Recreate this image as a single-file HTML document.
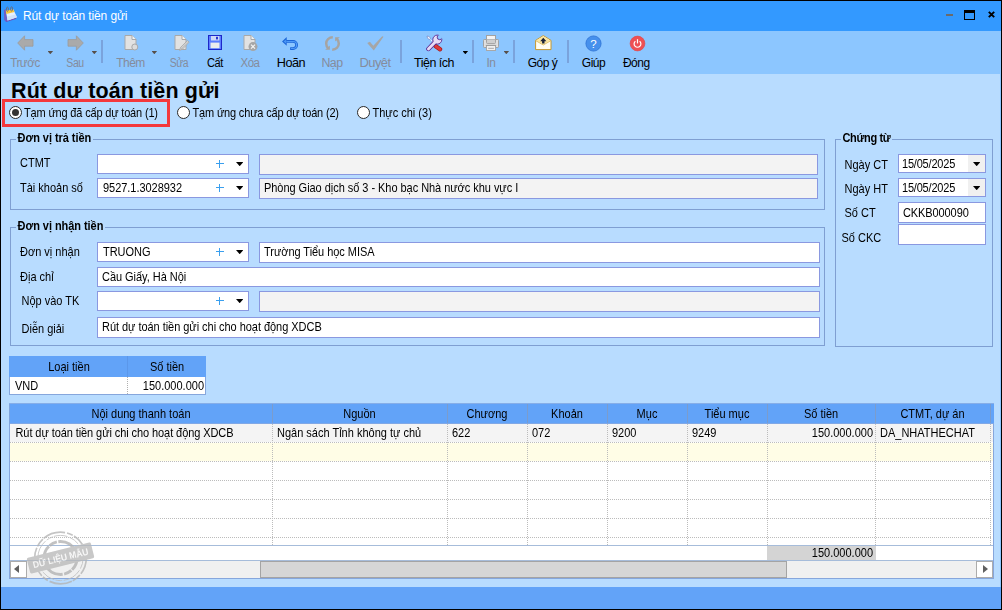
<!DOCTYPE html>
<html lang="vi">
<head>
<meta charset="utf-8">
<title>Rút dự toán tiền gửi</title>
<style>
*{box-sizing:border-box;margin:0;padding:0}
html,body{width:1002px;height:610px;overflow:hidden;background:#000}
body{font-family:"Liberation Sans",sans-serif;font-size:11px;color:#000;position:relative}
.abs{position:absolute}
#win{position:absolute;left:1px;top:1px;width:1000px;height:608px;background:#b8dcff;overflow:hidden}
#title{position:absolute;left:0;top:0;width:1000px;height:30px;background:#3399ff}
#title .txt{position:absolute;left:22px;top:8px;font-size:12px;line-height:14px;color:#fff;white-space:nowrap;letter-spacing:-.12px}
#tb{position:absolute;left:0;top:30px;width:1000px;height:43px;background:#8cc6ff}
.tbl{position:absolute;top:25px;font-size:12px;line-height:14px;white-space:nowrap;letter-spacing:-.5px;transform:translateX(-50%);color:#000}
.tbl.dis{color:#858c9c}
.sep{position:absolute;top:9px;width:2px;height:23px;background:#7aa3dc}
.dd{position:absolute;top:20px;margin-left:-.5px;width:5.600px;height:3.200px;background:#574f4a;clip-path:polygon(0 0,100% 0,50% 100%)}
.dd.blk{background:#000}
.ico{position:absolute}
h1{position:absolute;left:10px;top:78px;font-size:21.5px;line-height:24px;font-weight:bold;white-space:nowrap;letter-spacing:.1px}
.lbl{position:absolute;font-size:11px;line-height:13px;white-space:nowrap}
.grp{position:absolute;border:1px solid #7f9fd2}
.leg{position:absolute;font-weight:bold;font-size:11px;line-height:13px;background:#b8dcff;white-space:nowrap;padding:0 2px;letter-spacing:-0.05px}
.inp{letter-spacing:-.04px;position:absolute;border:1px solid #8a98e0;background:#fff;font-size:11px;line-height:13px;white-space:nowrap;overflow:hidden;padding:3px 0 0 5px}
.inp.ro{background:#f3f3f3}
.plus{position:absolute;width:8px;height:8px;margin:.6px 0 0 -.5px}
.plus:before{content:"";position:absolute;left:0;top:3.3px;width:8px;height:1.4px;background:#3a9fee}
.plus:after{content:"";position:absolute;left:3.3px;top:0;width:1.4px;height:8px;background:#3a9fee}
.arr{position:absolute;width:7.400px;height:4.200px;background:#000;clip-path:polygon(0 0,100% 0,50% 100%)}
.radio{position:absolute;width:13px;height:13px;border-radius:50%;border:1.3px solid #2a2a2a;background:#fff}
.radio.on:after{content:"";position:absolute;left:1.7px;top:1.7px;width:7px;height:7px;border-radius:50%;background:#333}
.gh{position:absolute;background:#62a3f8;font-size:11px;line-height:13px;text-align:center;white-space:nowrap;padding-top:3px}
.t{display:inline-block;transform:scaleY(1.1);transform-origin:0 10.3px}
.cell{position:absolute;font-size:11px;line-height:13px;white-space:nowrap}
</style>
</head>
<body>
<div id="win">
  <div id="title">
    <svg class="abs" style="left:2px;top:5px" width="16" height="18" viewBox="0 0 16 18">
      <path d="M0.9 3.9 L2.9 3.3 L4.3 15 L3.1 16 L1.2 14 Z" fill="#6f5cc4"/>
      <path d="M3.1 16 L3.3 14.4 L13.2 11.6 L13 13 Z" fill="#6a52b8"/>
      <path d="M2.8 4.5 L10.4 3.4 L13.9 11.2 L4.6 14.4 Z" fill="#e6f0fd"/>
      <path d="M4.2 10.500 L12.700 8.500 L13.900 11.200 L4.600 14.400 Z" fill="#cfe2fa"/>
      <path d="M2.8 4.5 L10.4 3.4 L11.5 5.9 L3.3 7.9 Z" fill="#f6c73c"/>
      <ellipse cx="4.4" cy="3.2" rx="1" ry="2.1" fill="none" stroke="#6c6c74" stroke-width=".9"/>
      <ellipse cx="8.6" cy="2.9" rx="1" ry="2.1" fill="none" stroke="#6c6c74" stroke-width=".9"/>
    </svg>
    <div class="txt">Rút dự toán tiền gửi</div>
    <div class="abs" style="left:945px;top:13px;width:7px;height:2px;background:#6b6b6b"></div>
    <div class="abs" style="left:963px;top:9px;width:11px;height:10px;border:1px solid #000;border-top:3px solid #000"></div>
    <svg class="abs" style="left:987px;top:10px" width="8" height="8" viewBox="0 0 8 8"><path d="M0.800 0.800 L6.200 6.200 M6.200 0.800 L0.800 6.200" stroke="#000" stroke-width="1.900"/></svg>
  </div>
  <div id="tb">
    <!-- Truoc -->
    <svg class="ico" style="left:16px;top:4px" width="17" height="16" viewBox="0 0 17 16"><path d="M0.7 8 L7.6 0.8 L7.6 4.6 L16 4.6 L16 11.200 L7.6 11.200 L7.6 15.200 Z" fill="#aaaaaa" stroke="#9a9a9a" stroke-width=".8"/></svg>
    <div class="tbl dis" style="left:24px;transform:translateX(-50%) scaleX(0.975)">Trước</div>
    <div class="dd" style="left:47px"></div>
    <!-- Sau -->
    <svg class="ico" style="left:65.500px;top:4px" width="17" height="16" viewBox="0 0 17 16"><path d="M16.300 8 L9.400 0.8 L9.400 4.6 L1 4.6 L1 11.200 L9.400 11.200 L9.400 15.200 Z" fill="#aaaaaa" stroke="#9a9a9a" stroke-width=".8"/></svg>
    <div class="tbl dis" style="left:74px;transform:translateX(-50%) scaleX(0.875)">Sau</div>
    <div class="dd" style="left:91px"></div>
    <div class="sep" style="left:100px"></div>
    <!-- Them -->
    <svg class="ico" style="left:122.5px;top:4px" width="15" height="16" viewBox="0 0 15 16"><path d="M1 .5 H8 L12 4.5 V14.5 H1 Z" fill="#e2e2e2" stroke="#a9a9a9"/><path d="M8 .5 V4.5 H12" fill="#f4f4f4" stroke="#a9a9a9"/><circle cx="10.8" cy="12" r="3" fill="#dcdcdc" stroke="#a9a9a9"/></svg>
    <div class="tbl dis" style="left:129.5px">Thêm</div>
    <div class="dd" style="left:151px"></div>
    <!-- Sua -->
    <svg class="ico" style="left:173px;top:4px" width="16" height="16" viewBox="0 0 16 16"><path d="M1 .5 H8 L12 4.5 V14.5 H1 Z" fill="#e2e2e2" stroke="#a9a9a9"/><path d="M8 .5 V4.5 H12" fill="#f4f4f4" stroke="#a9a9a9"/><path d="M5.6 15.4 L6.6 12.4 L13.4 5.600 L15 7.200 L8.400 14.200 Z" fill="#dcdcdc" stroke="#a4a4a4" stroke-width=".8"/><path d="M6.6 12.4 L8.4 14.2 M7.500 13.300 L14.200 6.400" stroke="#a4a4a4" stroke-width=".6" fill="none"/></svg>
    <div class="tbl dis" style="left:178px;transform:translateX(-50%) scaleX(0.87)">Sửa</div>
    <!-- Cat -->
    <svg class="ico" style="left:207px;top:4px" width="14" height="15" viewBox="0 0 14 15"><rect x=".5" y=".5" width="13" height="14" fill="#5b7cff" stroke="#1e28c8"/><rect x="3" y="1" width="8.4" height="4.5" fill="#cfd8f6"/><rect x="8" y="1.8" width="2" height="2.6" fill="#2a36d0"/><rect x="2.5" y="7.6" width="9" height="5.6" fill="#ececec"/></svg>
    <div class="tbl" style="left:214px;transform:translateX(-50%) scaleX(0.92)">Cất</div>
    <!-- Xoa -->
    <svg class="ico" style="left:241.5px;top:4px" width="16" height="17" viewBox="0 0 16 17"><path d="M1 .5 H8 L12 4.5 V14.5 H1 Z" fill="#e2e2e2" stroke="#a9a9a9"/><path d="M8 .5 V4.5 H12" fill="#f4f4f4" stroke="#a9a9a9"/><circle cx="10" cy="11.600" r="4.5" fill="#a6a6a6"/><path d="M8 9.600 L12 13.600 M12 9.600 L8 13.600" stroke="#f4f4f4" stroke-width="1.3"/></svg>
    <div class="tbl dis" style="left:248.5px;transform:translateX(-50%) scaleX(0.96)">Xóa</div>
    <!-- Hoan -->
    <svg class="ico" style="left:280px;top:6px" width="18" height="14" viewBox="0 0 18 14"><path d="M5.400 4.450 H12.100 A3.540 3.540 0 0 1 12.100 11.530 H9.140" fill="none" stroke="#1c66d8" stroke-width="2.750"/><path d="M1.070 4.450 L5.700 0.120 V8.780 Z" fill="#1c66d8"/><path d="M5.400 4.450 H12.100 A3.540 3.540 0 0 1 12.100 11.530 H10" fill="none" stroke="#4f9bf8" stroke-width="1.100"/><path d="M2.700 4.450 L4.900 2.400 V6.500 Z" fill="#4f9bf8"/></svg>
    <div class="tbl" style="left:289.5px;transform:translateX(-50%) scaleX(1.06)">Hoãn</div>
    <!-- Nap -->
    <svg class="ico" style="left:323px;top:4px" width="17" height="17" viewBox="0 0 17 17"><path d="M8.8 2.300 C5 2.300 2.200 5 2.200 8.500 C2.200 10.500 3 12.200 4.300 13.300" fill="none" stroke="#a6a4a2" stroke-width="2.500"/><path d="M1.200 14.700 H5.900 V10.400 Z" fill="#a6a4a2"/><path d="M8.200 14.700 C12 14.700 14.800 12 14.800 8.500 C14.800 6.500 14 4.800 12.700 3.700" fill="none" stroke="#a6a4a2" stroke-width="2.500"/><path d="M15.800 2.300 H11.100 V6.600 Z" fill="#a6a4a2"/></svg>
    <div class="tbl dis" style="left:331px;transform:translateX(-50%) scaleX(1.03)">Nạp</div>
    <!-- Duyet -->
    <svg class="ico" style="left:366px;top:5px" width="17" height="15" viewBox="0 0 17 15"><path d="M0.200 6.900 L2.900 5.800 L6.300 9.800 L15.200 0.200 L16.500 0.700 L6.800 14.500 Z" fill="#a6a6a6"/></svg>
    <div class="tbl dis" style="left:373.5px;transform:translateX(-50%) scaleX(1.08)">Duyệt</div>
    <div class="sep" style="left:399px"></div>
    <!-- Tien ich -->
    <svg class="ico" style="left:424px;top:3px" width="18" height="18" viewBox="0 0 18 18"><defs><mask id="wm"><rect width="18" height="18" fill="#fff"/><circle cx="14.700" cy="3.200" r="2.500" fill="#000"/></mask><clipPath id="wc"><circle cx="12.300" cy="5.600" r="4.400"/></clipPath></defs><path d="M2 2 L4.400 2.600 L5.800 5.200 L5.200 5.800 L2.600 4.400 Z" fill="#f4f8ff" stroke="#6a7ac0" stroke-width=".6"/><path d="M5.500 5.500 L9 9" stroke="#f0f4ff" stroke-width="1"/><path d="M10.800 12.200 L15 15.200" stroke="#a81818" stroke-width="4.400" stroke-linecap="round"/><path d="M10.800 12.200 L15 15.200" stroke="#de3a3a" stroke-width="3" stroke-linecap="round"/><path d="M3.400 15 L9.800 8.400" stroke="#5a2a92" stroke-width="4.400" stroke-linecap="round"/><g mask="url(#wm)"><circle cx="12.300" cy="5.600" r="4.500" fill="#e6dcf6" stroke="#5a2a92" stroke-width=".9"/></g><circle cx="14.700" cy="3.200" r="2.500" fill="none" stroke="#5a2a92" stroke-width=".9" clip-path="url(#wc)"/><path d="M3.400 15 L10.400 7.800" stroke="#e6dcf6" stroke-width="2.800" stroke-linecap="round"/></svg>
    <div class="tbl" style="left:433.3px;transform:translateX(-50%) scaleX(1.04)">Tiện ích</div>
    <div class="dd blk" style="left:462px"></div>
    <div class="sep" style="left:471px"></div>
    <!-- In -->
    <svg class="ico" style="left:482px;top:4px" width="16" height="16" viewBox="0 0 16 16"><rect x="3.5" y=".5" width="9" height="4.500" fill="#f4f4f4" stroke="#a2a2a2"/><rect x=".5" y="4.500" width="15" height="8" rx=".8" fill="#e0e0e0" stroke="#a2a2a2"/><path d="M3.500 4.500 V7.500 Q3.500 8.600 4.600 8.600 H11.400 Q12.500 8.600 12.500 7.500 V4.500" fill="#cfcfcf" stroke="#a2a2a2"/><rect x="3.500" y="10.500" width="9" height="5" fill="#f0f0f0" stroke="#a8a8a8"/><path d="M2.800 10.400 H13.200" stroke="#9c9c9c" stroke-width="1"/><path d="M5.200 13.300 H10.900" stroke="#a8a8a8" stroke-width="1"/></svg>
    <div class="tbl dis" style="left:490px">In</div>
    <div class="dd" style="left:503px"></div>
    <div class="sep" style="left:512px"></div>
    <!-- Gop y -->
    <svg class="ico" style="left:534px;top:4px" width="17" height="16" viewBox="0 0 17 16"><path d="M0.600 5.400 L8.300 0.600 L16 5.400 V14.600 H0.600 Z" fill="#fffdf2" stroke="#c8982a" stroke-width="1"/><path d="M1.100 5.400 L8.300 1.200 L15.500 5.400 L8.300 9.600 Z" fill="#fbe6a0"/><path d="M1 5.800 L8.300 10 L15.600 5.800" fill="none" stroke="#d8b24c" stroke-width=".8"/><path d="M8.300 2.800 L11.400 6.200 H9.500 V8.600 H7.100 V6.200 H5.200 Z" fill="#1a2238"/></svg>
    <div class="tbl" style="left:541.5px">Góp ý</div>
    <div class="sep" style="left:566px"></div>
    <!-- Giup -->
    <svg class="ico" style="left:583.600px;top:3.600px" width="17" height="17" viewBox="0 0 17 17"><circle cx="8.5" cy="8.5" r="7.600" fill="#4690ec" stroke="#2e72d4" stroke-width=".8"/><text x="8.5" y="12.600" text-anchor="middle" font-family="Liberation Sans,sans-serif" font-size="11.500" fill="#fff">?</text></svg>
    <div class="tbl" style="left:592.500px">Giúp</div>
    <!-- Dong -->
    <svg class="ico" style="left:628px;top:4px" width="17" height="17" viewBox="0 0 17 17"><circle cx="8.5" cy="8.5" r="7.400" fill="#ee5054" stroke="#e04448" stroke-width=".6"/><path d="M6.400 6.200 A3.400 3.400 0 1 0 10.600 6.200" fill="none" stroke="#fff" stroke-width="1.200"/><path d="M8.5 4.200 V8.400" stroke="#fff" stroke-width="1.200"/></svg>
    <div class="tbl" style="left:635.300px">Đóng</div>
  </div>
  <h1>Rút dự toán tiền gửi</h1>
  <!--FORM-->
  <div class="abs" style="left:1px;top:98px;width:168px;height:28px;border:3px solid #f4383c"></div>
  <div class="radio on" style="left:8px;top:105px"></div>
  <div class="lbl" style="left:23px;top:106px;letter-spacing:-.17px"><span class="t">Tạm ứng đã cấp dự toán (1)</span></div>
  <div class="radio" style="left:176px;top:105px"></div>
  <div class="lbl" style="left:191.5px;top:106px;letter-spacing:-.17px"><span class="t">Tạm ứng chưa cấp dự toán (2)</span></div>
  <div class="radio" style="left:356px;top:105px"></div>
  <div class="lbl" style="left:371.5px;top:106px"><span class="t">Thực chi (3)</span></div>
  <div class="grp" style="left:9px;top:138px;width:815px;height:71px"></div>
  <div class="leg" style="left:14.5px;top:131px"><span class="t">Đơn vị trả tiền</span></div>
  <div class="grp" style="left:9px;top:226px;width:815px;height:119px"></div>
  <div class="leg" style="left:14.5px;top:219px"><span class="t">Đơn vị nhận tiền</span></div>
  <div class="grp" style="left:834px;top:138px;width:158px;height:208px"></div>
  <div class="leg" style="left:839.5px;top:131px;letter-spacing:-.35px"><span class="t">Chứng từ</span></div>
  <div class="lbl" style="left:19px;top:156px"><span class="t">CTMT</span></div>
  <div class="inp" style="left:96px;top:153px;width:152px;height:20px"></div>
  <div class="plus" style="left:215px;top:158px"></div>
  <div class="arr" style="left:235px;top:161px"></div>
  <div class="inp ro" style="left:258px;top:153px;width:559px;height:21px;padding-left:4px"></div>
  <div class="lbl" style="left:19px;top:181px"><span class="t">Tài khoản số</span></div>
  <div class="inp" style="left:96px;top:177px;width:152px;height:20px"><span class="t">9527.1.3028932</span></div>
  <div class="plus" style="left:215px;top:182px"></div>
  <div class="arr" style="left:235px;top:185px"></div>
  <div class="inp ro" style="left:258px;top:177px;width:559px;height:21px;padding-left:4px"><span class="t">Phòng Giao dịch số 3 - Kho bạc Nhà nước khu vực I</span></div>
  <div class="lbl" style="left:19px;top:245px"><span class="t">Đơn vị nhận</span></div>
  <div class="inp" style="left:96px;top:241px;width:152px;height:20px"><span class="t">TRUONG</span></div>
  <div class="plus" style="left:215px;top:246px"></div>
  <div class="arr" style="left:235px;top:249px"></div>
  <div class="inp" style="left:258px;top:241px;width:561px;height:21px;padding-left:4px"><span class="t">Trường Tiểu học MISA</span></div>
  <div class="lbl" style="left:19px;top:270px"><span class="t">Địa chỉ</span></div>
  <div class="inp" style="left:96px;top:266px;width:723px;height:20px;padding-left:4px"><span class="t">Cầu Giấy, Hà Nội</span></div>
  <div class="lbl" style="left:20.5px;top:294px"><span class="t">Nộp vào TK</span></div>
  <div class="inp" style="left:96px;top:290px;width:152px;height:20px"></div>
  <div class="plus" style="left:215px;top:295px"></div>
  <div class="arr" style="left:235px;top:298px"></div>
  <div class="inp ro" style="left:258px;top:290px;width:561px;height:21px;padding-left:4px"></div>
  <div class="lbl" style="left:20.5px;top:321.5px"><span class="t">Diễn giải</span></div>
  <div class="inp" style="left:96px;top:316px;width:723px;height:21px;padding-left:4px"><span class="t">Rút dự toán tiền gửi chi cho hoạt động XDCB</span></div>
  <div class="lbl" style="left:843.5px;top:157.5px"><span class="t">Ngày CT</span></div>
  <div class="lbl" style="left:843.5px;top:181.5px"><span class="t">Ngày HT</span></div>
  <div class="lbl" style="left:843.5px;top:205.5px"><span class="t">Số CT</span></div>
  <div class="lbl" style="left:840.5px;top:230.5px"><span class="t">Số CKC</span></div>
  <div class="inp" style="left:897px;top:153px;width:88px;height:19px;padding-top:3px;padding-left:3px;letter-spacing:-.2px"><span class="t">15/05/2025</span></div>
  <div class="abs" style="left:967px;top:154px;width:17px;height:17px;background:#f0f0f0"></div>
  <div class="arr" style="left:972px;top:161px"></div>
  <div class="inp" style="left:897px;top:177px;width:88px;height:19px;padding-top:3px;padding-left:3px;letter-spacing:-.2px"><span class="t">15/05/2025</span></div>
  <div class="abs" style="left:967px;top:178px;width:17px;height:17px;background:#f0f0f0"></div>
  <div class="arr" style="left:972px;top:185px"></div>
  <div class="inp" style="left:897px;top:201px;width:88px;height:21px;padding-top:4px;padding-left:4px;letter-spacing:-.1px"><span class="t">CKKB000090</span></div>
  <div class="inp" style="left:897px;top:223px;width:88px;height:21px"></div>
  <!--/FORM-->
  <!--GRID-->
  <div class="abs" style="left:8px;top:355px;width:197px;height:39px;background:#fff;border:1px solid #86a6dc;border-top:none"></div>
  <div class="gh" style="left:8px;top:355px;width:118px;height:21px;padding-top:5px;padding-left:2px"><span class="t">Loại tiền</span></div>
  <div class="gh" style="left:127px;top:355px;width:78px;height:21px;padding-top:5px"><span class="t">Số tiền</span></div>
  <div class="abs" style="left:126px;top:355px;width:1px;height:21px;background:#5b97ea"></div>
  <div class="abs" style="left:126px;top:376px;width:0;height:17px;border-left:1px dotted #b0b0b0"></div>
  <div class="cell" style="left:14px;top:379px"><span class="t">VND</span></div>
  <div class="cell" style="left:127px;top:379px;width:76px;text-align:right"><span class="t">150.000.000</span></div>
  <div class="abs" style="left:8px;top:402px;width:985px;height:1px;background:#86aee8"></div>
  <div id="grid" class="abs" style="left:8px;top:403px;width:985px;height:175px;background:#fff;overflow:hidden">
  <div class="gh" style="left:0;top:0;width:985px;height:20px"></div>
  <div class="gh" style="left:1px;top:0;width:262px;height:20px;background:none;padding-top:4px"><span class="t">Nội dung thanh toán</span></div>
  <div class="gh" style="left:263px;top:0;width:175px;height:20px;background:none;padding-top:4px"><span class="t">Nguồn</span></div>
  <div class="gh" style="left:438px;top:0;width:80px;height:20px;background:none;padding-top:4px"><span class="t">Chương</span></div>
  <div class="gh" style="left:518px;top:0;width:80px;height:20px;background:none;padding-top:4px"><span class="t">Khoản</span></div>
  <div class="gh" style="left:598px;top:0;width:80px;height:20px;background:none;padding-top:4px"><span class="t">Mục</span></div>
  <div class="gh" style="left:678px;top:0;width:80px;height:20px;background:none;padding-top:4px"><span class="t">Tiểu mục</span></div>
  <div class="gh" style="left:758px;top:0;width:108px;height:20px;background:none;padding-top:4px"><span class="t">Số tiền</span></div>
  <div class="gh" style="left:866px;top:0;width:115px;height:20px;background:none;padding-top:4px"><span class="t">CTMT, dự án</span></div>
  <div class="abs" style="left:263px;top:1px;width:1px;height:20px;background:#7b9ccc;margin-top:-1px"></div>
  <div class="abs" style="left:438px;top:1px;width:1px;height:20px;background:#7b9ccc;margin-top:-1px"></div>
  <div class="abs" style="left:518px;top:1px;width:1px;height:20px;background:#7b9ccc;margin-top:-1px"></div>
  <div class="abs" style="left:598px;top:1px;width:1px;height:20px;background:#7b9ccc;margin-top:-1px"></div>
  <div class="abs" style="left:678px;top:1px;width:1px;height:20px;background:#7b9ccc;margin-top:-1px"></div>
  <div class="abs" style="left:758px;top:1px;width:1px;height:20px;background:#7b9ccc;margin-top:-1px"></div>
  <div class="abs" style="left:866px;top:1px;width:1px;height:20px;background:#7b9ccc;margin-top:-1px"></div>
  <div class="abs" style="left:981px;top:1px;width:1px;height:20px;background:#7b9ccc;margin-top:-1px"></div>
  <div class="abs" style="left:0;top:19px;width:985px;height:1px;background:#80a8e6"></div>
  <div class="abs" style="left:0;top:0;width:1px;height:20px;background:#7fa4dc"></div>
  <div class="abs" style="left:1px;top:20px;width:983px;height:18px;background:#f4f4f4"></div>
  <div class="abs" style="left:1px;top:38px;width:981px;height:0;border-top:1px dotted #bcbcbc"></div>
  <div class="abs" style="left:1px;top:39px;width:983px;height:18px;background:#fffde6"></div>
  <div class="abs" style="left:1px;top:57px;width:981px;height:0;border-top:1px dotted #bcbcbc"></div>
  <div class="abs" style="left:1px;top:58px;width:983px;height:18px;background:#fff"></div>
  <div class="abs" style="left:1px;top:76px;width:981px;height:0;border-top:1px dotted #bcbcbc"></div>
  <div class="abs" style="left:1px;top:77px;width:983px;height:18px;background:#fff"></div>
  <div class="abs" style="left:1px;top:95px;width:981px;height:0;border-top:1px dotted #bcbcbc"></div>
  <div class="abs" style="left:1px;top:96px;width:983px;height:18px;background:#fff"></div>
  <div class="abs" style="left:1px;top:114px;width:981px;height:0;border-top:1px dotted #bcbcbc"></div>
  <div class="abs" style="left:1px;top:115px;width:983px;height:18px;background:#fff"></div>
  <div class="abs" style="left:1px;top:133px;width:981px;height:0;border-top:1px dotted #bcbcbc"></div>
  <div class="abs" style="left:1px;top:134px;width:983px;height:7px;background:#fff"></div>
  <div class="abs" style="left:263px;top:20px;width:0;height:121px;border-left:1px dotted #bcbcbc"></div>
  <div class="abs" style="left:438px;top:20px;width:0;height:121px;border-left:1px dotted #bcbcbc"></div>
  <div class="abs" style="left:518px;top:20px;width:0;height:121px;border-left:1px dotted #bcbcbc"></div>
  <div class="abs" style="left:598px;top:20px;width:0;height:121px;border-left:1px dotted #bcbcbc"></div>
  <div class="abs" style="left:678px;top:20px;width:0;height:121px;border-left:1px dotted #bcbcbc"></div>
  <div class="abs" style="left:758px;top:20px;width:0;height:121px;border-left:1px dotted #bcbcbc"></div>
  <div class="abs" style="left:866px;top:20px;width:0;height:121px;border-left:1px dotted #bcbcbc"></div>
  <div class="abs" style="left:981px;top:20px;width:0;height:121px;border-left:1px dotted #bcbcbc"></div>
  <div class="cell" style="left:6.5px;top:23px;letter-spacing:-.08px"><span class="t">Rút dự toán tiền gửi chi cho hoạt động XDCB</span></div>
  <div class="cell" style="left:268px;top:23px"><span class="t">Ngân sách Tỉnh không tự chủ</span></div>
  <div class="cell" style="left:443px;top:23px"><span class="t">622</span></div>
  <div class="cell" style="left:523px;top:23px"><span class="t">072</span></div>
  <div class="cell" style="left:603px;top:23px"><span class="t">9200</span></div>
  <div class="cell" style="left:683px;top:23px"><span class="t">9249</span></div>
  <div class="cell" style="left:871px;top:23px"><span class="t">DA_NHATHECHAT</span></div>
  <div class="cell" style="left:758px;top:23px;width:106px;text-align:right"><span class="t">150.000.000</span></div>
  <div class="abs" style="left:1px;top:141px;width:983px;height:1px;background:#a6bcda"></div>
  <div class="abs" style="left:758px;top:142px;width:109px;height:14px;background:#d4d4d4"></div>
  <div class="cell" style="left:758px;top:143px;width:106px;text-align:right"><span class="t">150.000.000</span></div>
  <div class="abs" style="left:1px;top:156px;width:983px;height:18px;background:#f0f0f0;border-top:1px solid #a6bcda"></div>
  <div class="abs" style="left:1px;top:157px;width:17px;height:17px;background:#fff;border:1px solid #acacac"></div>
  <div class="abs" style="left:5px;top:161px;width:0;height:0;border-top:4.500px solid transparent;border-bottom:4.500px solid transparent;border-right:5px solid #606060"></div>
  <div class="abs" style="left:967px;top:157px;width:17px;height:17px;background:#fff;border:1px solid #acacac"></div>
  <div class="abs" style="left:974px;top:161px;width:0;height:0;border-top:4.500px solid transparent;border-bottom:4.500px solid transparent;border-left:5px solid #606060"></div>
  <div class="abs" style="left:251px;top:157px;width:527px;height:17px;background:#d6d6d6;border:1px solid #a4a4a4"></div>
  <div class="abs" style="left:0;top:20px;width:1px;height:155px;background:#86a6dc"></div>
  <div class="abs" style="left:984px;top:20px;width:1px;height:155px;background:#86a6dc"></div>
  <div class="abs" style="left:0;top:174px;width:985px;height:1px;background:#86a6dc"></div>
  </div>
  <div class="abs" style="left:0;top:586px;width:1000px;height:22px;background:#62a3f8"></div>
  <div class="abs" style="left:999px;top:30px;width:1px;height:556px;background:#8cc6ff"></div>
  <svg class="abs" style="left:24px;top:527.3px" width="72" height="60" viewBox="0 0 72 60">
  <g opacity=".78">
    <circle cx="35.500" cy="30" r="25.800" fill="none" stroke="#b4b4b4" stroke-width="1.700" stroke-dasharray="17 1.500 9 1 23 2 6 1.500 12 1"/>
    <circle cx="35.500" cy="30" r="22.600" fill="none" stroke="#bcbcbc" stroke-width="1" stroke-dasharray="11 2 19 1.500 7 1 14 2"/>
    <circle cx="35.500" cy="30" r="16.500" fill="none" stroke="#b2b2b2" stroke-width="3" stroke-dasharray="13 1 8 1.500 21 1 5 1"/>
    <g transform="rotate(-14 35.500 30)">
      <rect x="2.500" y="22" width="66" height="16" rx="1.500" fill="#b9b9b9"/>
      <text x="35.500" y="33.400" text-anchor="middle" font-family="Liberation Sans,sans-serif" font-weight="bold" font-size="9.400" fill="#f6f6f6" textLength="57" lengthAdjust="spacingAndGlyphs">DỮ LIỆU MẪU</text>
    </g>
  </g>
</svg>
  <!--/GRID-->
</div>
</body>
</html>
